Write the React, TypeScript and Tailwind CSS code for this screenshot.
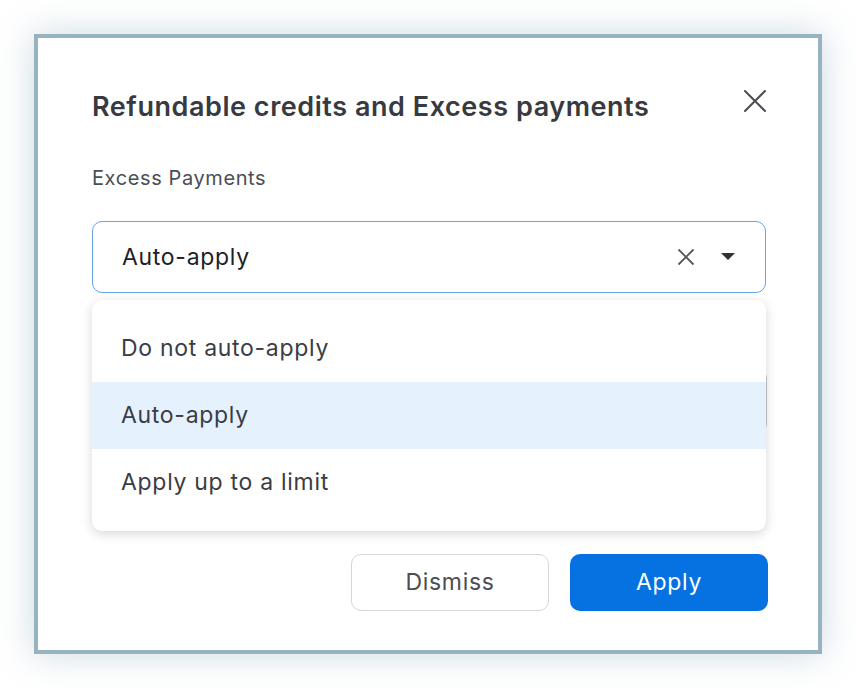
import React from 'react';

const options = ['Do not auto-apply', 'Auto-apply', 'Apply up to a limit'];

export default function App() {
  const selected = 'Auto-apply';

  return (
    <div
      className="w-[856px] h-[688px] bg-white pt-[34px] pl-[34px]"
      style={{ fontFamily: 'Inter, "Noto Sans", sans-serif' }}
    >
      <div className="w-[788px] h-[620px] bg-white border-4 border-[#97b2c0] shadow-[0_0_34px_rgba(110,145,165,0.35)] pt-[53px] pl-[54px] pr-[52px]">
        {/* Header */}
        <div className="flex justify-between items-start">
          <h2 className="text-[27px] leading-[32px] font-semibold text-[#373a41] tracking-[0.55px]">
            Refundable credits and Excess payments
          </h2>
          <button className="-mt-[6px] mr-[-5px] w-[32px] h-[32px] flex items-center justify-center text-[#4a4d53]">
            <svg width="24" height="24" viewBox="0 0 24 24" fill="none" stroke="currentColor" strokeWidth="2" strokeLinecap="round">
              <path d="M2 2 L22 22 M22 2 L2 22" />
            </svg>
          </button>
        </div>

        {/* Field */}
        <label className="block mt-[43px] text-[20px] leading-[24px] tracking-[0.6px] text-[#4a4e55]">
          Excess Payments
        </label>

        <div className="relative mt-[31px]">
          <div className="h-[72px] border border-[#6aa4e8] rounded-[10px] flex items-center pl-[29px] pr-[30px]">
            <span className="flex-1 text-[23px] tracking-[0.7px] text-[#1f2126]">{selected}</span>
            <svg width="18" height="18" viewBox="0 0 18 18" fill="none" stroke="#55585e" strokeWidth="1.8">
              <path d="M1.5 1.5 L16.5 16.5 M16.5 1.5 L1.5 16.5" />
            </svg>
            <svg className="ml-[26px]" width="14" height="8" viewBox="0 0 14 8" fill="#2f3237">
              <path d="M0 0 H14 L7 7 Z" />
            </svg>
          </div>

          {/* Dropdown menu */}
          <div className="absolute left-0 right-0 top-[79px] z-10 bg-white rounded-[10px] shadow-[0_3px_12px_rgba(0,0,0,0.16)] py-[15px]">
            {options.map((o) => (
              <div
                key={o}
                className={`h-[67px] flex items-center pl-[29px] text-[23px] tracking-[0.7px] text-[#3a3d44] ${
                  o === selected ? 'bg-[#e6f1fe]' : ''
                }`}
              >
                {o}
              </div>
            ))}
          </div>
        </div>

        {/* Field hidden under menu */}
        <div className="mt-[77px] h-[62px] border border-[#c8c9cc] rounded-[8px] mr-[-1px]" />

        {/* Actions */}
        <div className="mt-[122px] flex justify-end gap-[21px] mr-[-2px]">
          <button className="w-[198px] h-[57px] rounded-[10px] border border-[#d6d7da] bg-white text-[23px] tracking-[0.7px] text-[#4a4d53]">
            Dismiss
          </button>
          <button className="w-[198px] h-[57px] rounded-[10px] bg-[#0672e1] text-[23px] tracking-[0.7px] text-white">
            Apply
          </button>
        </div>
      </div>
    </div>
  );
}
